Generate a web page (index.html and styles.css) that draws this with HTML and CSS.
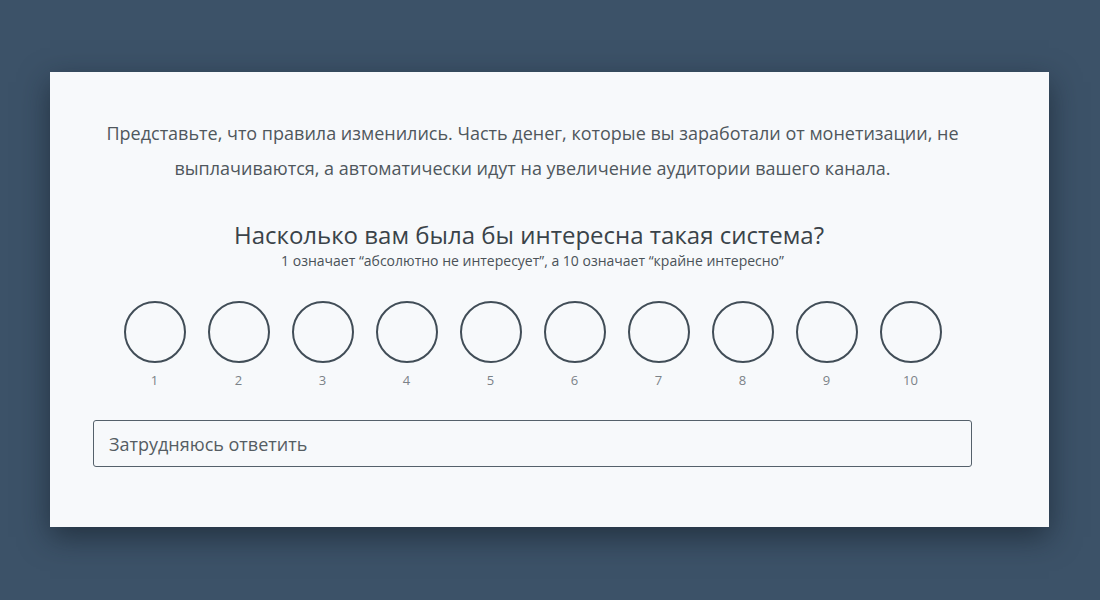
FILE: index.html
```html
<!DOCTYPE html>
<html lang="ru">
<head>
<meta charset="utf-8">
<link rel="stylesheet" href="styles.css">
</head>
<body>
<div class="card">
  <div class="content">
    <p class="intro">Представьте, что правила изменились. Часть денег, которые вы заработали от монетизации, не выплачиваются, а автоматически идут на увеличение аудитории вашего канала.</p>
    <h2 class="question">Насколько вам была бы интересна такая система?</h2>
    <p class="hint">1 означает “абсолютно не интересует”, а 10 означает “крайне интересно”</p>
    <div class="scale">
      <div class="opt"><span class="circle"></span><span class="num">1</span></div>
      <div class="opt"><span class="circle"></span><span class="num">2</span></div>
      <div class="opt"><span class="circle"></span><span class="num">3</span></div>
      <div class="opt"><span class="circle"></span><span class="num">4</span></div>
      <div class="opt"><span class="circle"></span><span class="num">5</span></div>
      <div class="opt"><span class="circle"></span><span class="num">6</span></div>
      <div class="opt"><span class="circle"></span><span class="num">7</span></div>
      <div class="opt"><span class="circle"></span><span class="num">8</span></div>
      <div class="opt"><span class="circle"></span><span class="num">9</span></div>
      <div class="opt"><span class="circle"></span><span class="num">10</span></div>
    </div>
    <div class="unsure">Затрудняюсь ответить</div>
  </div>
</div>
</body>
</html>
```
FILE: styles.css
```css
html, body {
  margin: 0;
  padding: 0;
}
body {
  width: 1100px;
  height: 600px;
  background: #3c5268;
  font-family: "Open Sans", "Liberation Sans", sans-serif;
  overflow: hidden;
  padding-top: 72px;
  box-sizing: border-box;
}
.card {
  margin-left: 50px;
  width: 999px;
  height: 455px;
  background: #f7f9fb;
  box-shadow: 0 10px 28px rgba(18, 28, 38, 0.6);
  box-sizing: border-box;
  padding: 43.5px 77px 0 43px;
}
.content {
  display: flex;
  flex-direction: column;
  align-items: center;
}
.intro {
  margin: 0;
  text-align: center;
  font-size: 18px;
  line-height: 35px;
  color: #4f575d;
}
.question {
  margin: 0;
  margin-top: 33.5px;
  padding-right: 7px;
  font-weight: 400;
  font-size: 24px;
  line-height: 32px;
  color: #3a4349;
}
.hint {
  margin: 0;
  margin-top: 1px;
  font-size: 14px;
  line-height: 18px;
  color: #4a5258;
}
.scale {
  display: flex;
  gap: 22px;
  margin-top: 31px;
}
.opt {
  display: flex;
  flex-direction: column;
  align-items: center;
  width: 62px;
}
.circle {
  width: 62px;
  height: 62px;
  border: 2px solid #414d57;
  border-radius: 50%;
  box-sizing: border-box;
}
.num {
  margin-top: 8px;
  font-size: 13px;
  line-height: 18px;
  color: #7b8288;
}
.unsure {
  margin-top: 31px;
  align-self: stretch;
  height: 47px;
  box-sizing: border-box;
  border: 1px solid #55616b;
  border-radius: 3px;
  padding: 0 15px;
  display: flex;
  align-items: center;
  font-size: 18px;
  color: #555d63;
}
```
